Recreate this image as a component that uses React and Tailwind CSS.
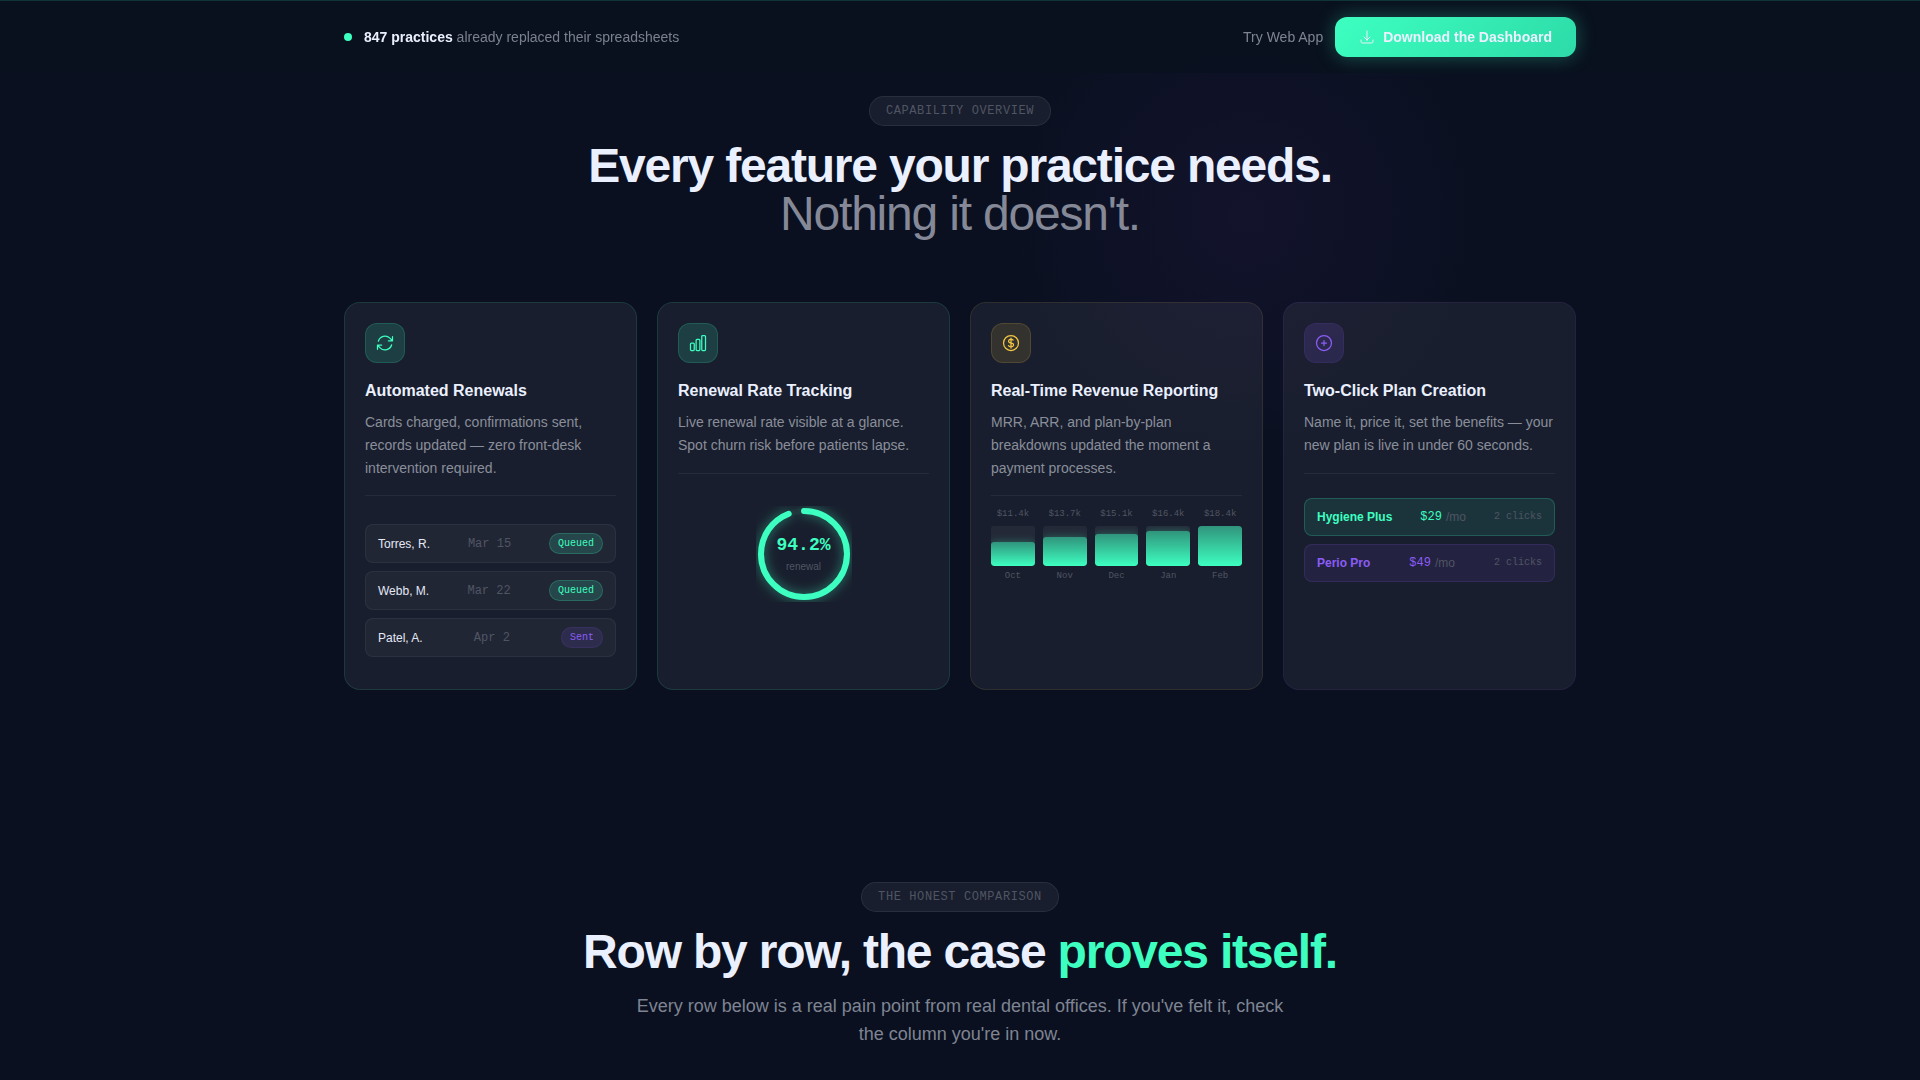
import {
  HiOutlineArrowDownTray,
  HiOutlineArrowPath,
  HiOutlineChartBar,
  HiOutlineCurrencyDollar,
  HiOutlinePlusCircle,
} from 'react-icons/hi2'

const RENEWALS = [
  { name: 'Torres, R.', date: 'Mar 15', status: 'Queued' },
  { name: 'Webb, M.', date: 'Mar 22', status: 'Queued' },
  { name: 'Patel, A.', date: 'Apr 2', status: 'Sent' },
]

const REVENUE = [
  { month: 'Oct', label: '$11.4k', pct: 60 },
  { month: 'Nov', label: '$13.7k', pct: 73 },
  { month: 'Dec', label: '$15.1k', pct: 80 },
  { month: 'Jan', label: '$16.4k', pct: 88 },
  { month: 'Feb', label: '$18.4k', pct: 100 },
]

const STATUS = {
  Queued: 'bg-[#3dffc0]/15 border-[#3dffc0]/20 text-[#3dffc0]',
  Sent: 'bg-[#8b5cf6]/12 border-[#8b5cf6]/12 text-[#8b5cf6]',
}

const TONES = {
  mint: { card: 'border-[#3dffc0]/12', icon: 'bg-[#3dffc0]/15 border-[#3dffc0]/15 text-[#3dffc0]' },
  gold: { card: 'border-[#f5c842]/10', icon: 'bg-[#f5c842]/12 border-[#f5c842]/15 text-[#f5c842]' },
  violet: { card: 'border-[#8b5cf6]/10', icon: 'bg-[#8b5cf6]/15 border-[#8b5cf6]/10 text-[#8b5cf6]' },
}

const MONO = "font-['Liberation_Mono',monospace]"

function Eyebrow({ children }) {
  return (
    <div className={`${MONO} rounded-full border border-white/8 bg-white/6 px-4 py-1.5 text-xs tracking-wider uppercase text-[#505563]`}>
      {children}
    </div>
  )
}

function FeatureCard({ tone, icon: Icon, title, text, children }) {
  return (
    <article className={`rounded-2xl border bg-white/6 p-5 ${TONES[tone].card}`}>
      <div className={`mb-4 flex size-10 items-center justify-center rounded-xl border ${TONES[tone].icon}`}>
        <Icon size={20} aria-hidden="true" />
      </div>
      <h3 className="mb-2 text-base font-bold text-[#ebf0ff]">{title}</h3>
      <p className="text-sm leading-relaxed text-[#8a8e9b]">{text}</p>
      <div className="mt-4 border-t border-white/6">{children}</div>
    </article>
  )
}

function RenewalQueue() {
  return (
    <ul className="flex flex-col gap-2 pt-7 pb-3">
      {RENEWALS.map(r => (
        <li key={r.name} className="flex items-center justify-between rounded-lg border border-white/5 bg-white/4 px-3 py-2">
          <span className="text-xs text-[#e4e8f5]">{r.name}</span>
          <span className={`${MONO} text-xs text-[#505563]`}>{r.date}</span>
          <span className={`${MONO} rounded-full border px-2 py-0.5 text-[10px] leading-[15px] ${STATUS[r.status]}`}>{r.status}</span>
        </li>
      ))}
    </ul>
  )
}

function RenewalRing() {
  return (
    <div className="flex justify-center pt-8">
      <div className="relative size-24">
        <svg className="size-24" viewBox="0 0 96 96" fill="none" strokeWidth="6" aria-hidden="true">
          <circle cx="48" cy="48" r="43" stroke="#ffffff" strokeOpacity="0.03" />
          <circle cx="48" cy="48" r="43" stroke="#3dffc0" strokeLinecap="round" pathLength="100"
            strokeDasharray="94.2 100" transform="rotate(-90 48 48)"
            className="drop-shadow-[0_0_6px_#3dffc080]" />
        </svg>
        <div className="absolute inset-0 flex flex-col items-center justify-center pb-0.5">
          <span className={`${MONO} text-lg font-bold text-[#3dffc0]`}>94.2%</span>
          <span className="text-[10px] leading-[15px] text-[#505563]">renewal</span>
        </div>
      </div>
    </div>
  )
}

function RevenueBars() {
  return (
    <div className={`${MONO} flex gap-2 pt-3 text-center text-[9px] leading-[12px] text-[#505563]`}>
      {REVENUE.map(r => (
        <div key={r.month} className="min-w-0 flex-1">
          <div className="mb-1.5">{r.label}</div>
          <div className="flex h-10 items-end overflow-hidden rounded-[3px] bg-white/5">
            <div className="w-full rounded-[3px] bg-linear-to-t from-[#3dffc0] to-[#3dffc0]/50 shadow-[0_0_8px_#3dffc04d]"
              style={{ height: `${r.pct}%` }} />
          </div>
          <div className="mt-1">{r.month}</div>
        </div>
      ))}
    </div>
  )
}

function PlanRow({ name, price, tone }) {
  return (
    <li className={`flex items-center justify-between rounded-lg border px-3 py-2.5 text-xs ${tone}`}>
      <span className="font-bold">{name}</span>
      <span className="flex gap-1">
        <span className={MONO}>{price}</span>
        <span className="text-[#505563]">/mo</span>
      </span>
      <span className={`${MONO} text-[10px] leading-[15px] text-[#505563]`}>2 clicks</span>
    </li>
  )
}

export default function App() {
  return (
    <div className="relative min-h-screen overflow-hidden bg-[#0a1020] font-['Liberation_Sans',Arial,sans-serif]">
      {/* Ambient glow */}
      <div className="pointer-events-none absolute -top-9 left-[calc(50%+36px)] size-[500px] rounded-full bg-radial from-[#8b3fd0]/7 to-transparent to-70%" />

      {/* Top bar */}
      <header className="fixed inset-x-0 top-0 z-10 border-t border-[#3dffc0]/15 bg-[#0a111f]/95">
        <div className="mx-auto flex max-w-7xl items-center justify-between px-6 py-4">
          <div className="flex items-center gap-3 text-sm text-[#7b808e]">
            <span className="size-2 rounded-full bg-[#3dffc0]" />
            <p><strong className="text-[#ebf0ff]">847 practices</strong> already replaced their spreadsheets</p>
          </div>
          <div className="flex items-center gap-3 text-sm">
            <a href="#app" className="text-[#7f8492]">Try Web App</a>
            <button className="flex h-10 items-center gap-2 rounded-xl bg-linear-135 from-[#3dffc0] to-[#2ddba8] px-6 font-bold text-[#ebf0ff] shadow-[0_0_20px_#3dffc04d]">
              <HiOutlineArrowDownTray size={16} aria-hidden="true" />
              Download the Dashboard
            </button>
          </div>
        </div>
      </header>

      <main className="relative">
        {/* Features */}
        <section className="mx-auto max-w-7xl px-6 py-24">
          <div className="mb-16 flex flex-col items-center gap-4 text-center">
            <Eyebrow>Capability Overview</Eyebrow>
            <h2 className="text-5xl leading-none font-bold tracking-tight text-[#ebf0ff]">
              Every feature your practice needs.
              <br />
              <span className="font-normal text-[#858997]">Nothing it doesn't.</span>
            </h2>
          </div>

          <div className="grid grid-cols-1 gap-5 sm:grid-cols-2 lg:grid-cols-4">
            <FeatureCard tone="mint" icon={HiOutlineArrowPath} title="Automated Renewals"
              text="Cards charged, confirmations sent, records updated — zero front-desk intervention required.">
              <RenewalQueue />
            </FeatureCard>

            <FeatureCard tone="mint" icon={HiOutlineChartBar} title="Renewal Rate Tracking"
              text="Live renewal rate visible at a glance. Spot churn risk before patients lapse.">
              <RenewalRing />
            </FeatureCard>

            <FeatureCard tone="gold" icon={HiOutlineCurrencyDollar} title="Real-Time Revenue Reporting"
              text="MRR, ARR, and plan-by-plan breakdowns updated the moment a payment processes.">
              <RevenueBars />
            </FeatureCard>

            <FeatureCard tone="violet" icon={HiOutlinePlusCircle} title="Two-Click Plan Creation"
              text="Name it, price it, set the benefits — your new plan is live in under 60 seconds.">
              <ul className="flex flex-col gap-2 pt-6">
                <PlanRow name="Hygiene Plus" price="$29" tone="border-[#3dffc0]/20 bg-[#3dffc0]/10 text-[#3dffc0]" />
                <PlanRow name="Perio Pro" price="$49" tone="border-[#8b5cf6]/15 bg-[#8b5cf6]/10 text-[#8b5cf6]" />
              </ul>
            </FeatureCard>
          </div>
        </section>

        {/* Comparison */}
        <section className="mx-auto flex max-w-7xl flex-col items-center gap-4 px-6 pt-24 text-center">
          <Eyebrow>The Honest Comparison</Eyebrow>
          <h2 className="text-5xl leading-none font-bold tracking-tight text-[#ebf0ff]">
            Row by row, the case <span className="text-[#3dffc0]">proves itself.</span>
          </h2>
          <p className="max-w-2xl text-lg leading-7 text-[#7f8492]">
            Every row below is a real pain point from real dental offices. If you've felt it, check the column you're in now.
          </p>
        </section>
      </main>
    </div>
  )
}
